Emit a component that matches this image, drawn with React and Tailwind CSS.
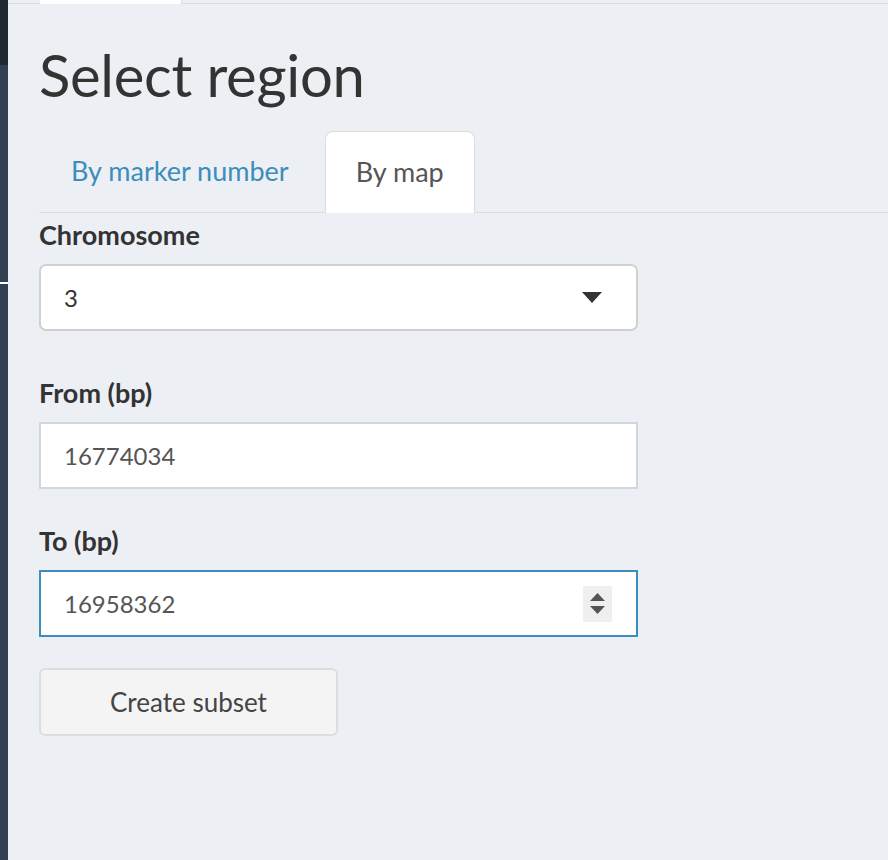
import React from "react";

export default function App() {
  return (
    <div className="flex w-[888px] h-[860px] bg-[#ecf0f5] font-['Lato',sans-serif] text-[#333] overflow-hidden">
      <div className="w-[8px] flex flex-col shrink-0">
        <div className="h-[65px] bg-[#1e282f]" />
        <div className="h-[217px] bg-[#2f4152]" />
        <div className="h-[2px] bg-white" />
        <div className="flex-1 bg-[#2f4152]" />
      </div>
      <div className="flex-1 flex flex-col">
        <div className="flex h-[4px]">
          <div className="w-[32px] border-b border-[#dddddd]" />
          <div className="w-[142px] bg-white border-r border-[#dddddd]" />
          <div className="flex-1 border-b border-[#dddddd]" />
        </div>
        <div className="pl-[31px]">
          <h2 className="text-[58px] leading-none pt-[42px] h-[127px] text-[#333] font-normal tracking-[-0.3px]">Select region</h2>
          <div className="flex h-[82px] border-b border-[#dddddd] -mr-[1px]">
            <div className="px-[32px] flex items-center text-[27px] text-[#3c8dbc]">By marker number</div>
            <div className="ml-[4px] px-[30px] flex items-center text-[27px] text-[#555] bg-white border border-[#dddddd] border-b-0 rounded-t-[8px] -mb-[1px]">By map</div>
          </div>
          <div className="w-[599px]">
            <div className="text-[27px] font-bold leading-[44px] mb-[7px]">Chromosome</div>
            <div className="h-[67px] bg-white border-2 border-[#d0d0d0] rounded-[7px] flex items-center justify-between pl-[23px] pr-[34px] text-[24px] text-[#333]">
              <span>3</span>
              <svg width="20" height="11" viewBox="0 0 20 11"><path d="M0 0 L20 0 L10 11 Z" fill="#333" /></svg>
            </div>
            <div className="mt-[40px] text-[27px] font-bold leading-[44px] mb-[7px]">From (bp)</div>
            <div className="h-[67px] bg-white border-2 border-[#d2d6de] flex items-center pl-[23px] text-[24px] text-[#555]">16774034</div>
            <div className="mt-[30px] text-[27px] font-bold leading-[44px] mb-[7px]">To (bp)</div>
            <div className="h-[67px] bg-white border-2 border-[#3c8dbc] flex items-center justify-between pl-[23px] pr-[24px] text-[24px] text-[#555]">
              <span>16958362</span>
              <div className="w-[29px] h-[36px] bg-[#efefef] flex flex-col items-center justify-center gap-[5px]">
                <svg width="15" height="8" viewBox="0 0 15 8"><path d="M7.5 0 L15 8 L0 8 Z" fill="#555" /></svg>
                <svg width="15" height="8" viewBox="0 0 15 8"><path d="M0 0 L15 0 L7.5 8 Z" fill="#555" /></svg>
              </div>
            </div>
            <button className="mt-[31px] w-[299px] h-[68px] bg-[#f4f4f4] border-2 border-[#dddddd] rounded-[6px] text-[26px] text-[#444]">Create subset</button>
          </div>
        </div>
      </div>
    </div>
  );
}
